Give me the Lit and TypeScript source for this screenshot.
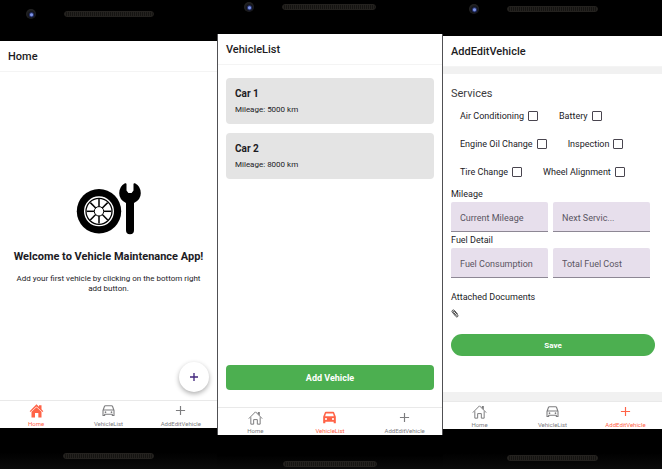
import { LitElement, html, css, svg } from "lit";
import { customElement, property } from "lit/decorators.js";

type Tab = "Home" | "VehicleList" | "AddEditVehicle";

const houseOutline = svg`
  <path d="M1.300 10 9 2.200 16.700 10M3.400 9.200V17H6.800V11.500H11.200V17H14.600V9.200"
    fill="none" stroke="currentColor" stroke-width="1.200" stroke-linejoin="round" stroke-linecap="round"/>
  <path d="M11.800 4.600V2.400H14.200V7.200Z" fill="currentColor"/>`;

const houseFilled = svg`
  <path d="M0.800 9.800 9 1.600 12 4.500V2.600H15V7.400L17.200 9.800 16.200 10.900 9 4.200 1.800 10.900Z" fill="currentColor"/>
  <path d="M3 10.600 9 5 15 10.600V17.400H11.200V12H7.200V17.400H3Z" fill="currentColor"/>`;

const carOutline = svg`
  <path d="M2.400 9 4.100 4.200Q4.400 3.300 5.300 3.300H12.700Q13.600 3.300 13.900 4.200L15.600 9V15H13.600V13.400H4.400V15H2.400ZM3 8.400H15"
    fill="none" stroke="currentColor" stroke-width="1.300" stroke-linejoin="round"/>
  <circle cx="5.400" cy="11" r="1" fill="currentColor"/>
  <circle cx="12.600" cy="11" r="1" fill="currentColor"/>`;

const carFilled = svg`
  <path fill-rule="evenodd" fill="currentColor"
    d="M3.400 2.900Q3.700 2.100 4.600 2.100H13.400Q14.300 2.100 14.600 2.900L16.600 8.200V15.800H14V14H4V15.800H1.400V8.200ZM3.800 7.400H14.200L13.200 4.300H4.800ZM4.800 9.500A1.300 1.300 0 1 0 4.800 12.100 1.300 1.300 0 1 0 4.800 9.500ZM13.200 9.500A1.300 1.300 0 1 0 13.200 12.100 1.300 1.300 0 1 0 13.200 9.500Z"/>`;

const plus = svg`
  <path d="M9 3.500V14.500M3.500 9H14.500" fill="none" stroke="currentColor" stroke-width="1.400"/>`;

@customElement("tab-bar")
class TabBar extends LitElement {
  @property() active: Tab = "Home";

  static styles = css`
    nav {
      display: grid;
      grid-template-columns: repeat(3, 1fr);
      border-top: 1px solid #e9e9e9;
      background: #fff;
    }
    a {
      display: flex;
      flex-direction: column;
      align-items: center;
      gap: 2px;
      padding-top: 2px;
      color: #7d7d7f;
      font: 6px/8px Roboto, sans-serif;
      text-decoration: none;
    }
    a.active {
      color: #ff6347;
    }
    svg {
      width: 15px;
      height: 15px;
    }
  `;

  private icon(tab: Tab) {
    if (tab === "Home") return this.active === tab ? houseFilled : houseOutline;
    if (tab === "VehicleList") return this.active === tab ? carFilled : carOutline;
    return plus;
  }

  render() {
    const tabs: Tab[] = ["Home", "VehicleList", "AddEditVehicle"];
    return html`<nav>
      ${tabs.map(
        (tab) => html`<a href="#${tab}" class=${tab === this.active ? "active" : ""}>
          <svg viewBox="0 0 18 18" aria-hidden="true">${this.icon(tab)}</svg>${tab}
        </a>`
      )}
    </nav>`;
  }
}

@customElement("phone-frame")
class PhoneFrame extends LitElement {
  @property() heading: Tab = "Home";

  static styles = css`
    :host {
      display: flex;
      flex-direction: column;
      background: #000;
    }
    .top,
    .bottom {
      box-sizing: border-box;
      display: flex;
      flex: none;
      align-items: flex-start;
    }
    .top {
      height: var(--top, 36px);
      padding: var(--camera-y, 4px) 0 0 12%;
      gap: 28px;
    }
    .bottom {
      height: var(--bottom, 40px);
      justify-content: center;
      padding-top: var(--grill-y, 26px);
      background: linear-gradient(#000 60%, #0b0b0b);
    }
    .camera {
      width: 10px;
      height: 10px;
      border-radius: 50%;
      background: radial-gradient(circle at 55% 58%, #7f95e8 0 1px, #27336e 2px, #14151c 3px, #222 5px);
    }
    .grill {
      box-sizing: border-box;
      width: 42%;
      height: 6px;
      border: 1px solid #24221f;
      border-radius: 3px;
      background: repeating-linear-gradient(90deg, #24221f 0 1px, #151412 1px 2px);
    }
    .top .grill {
      width: 47%;
      margin-top: 2px;
    }
    .screen {
      flex: 1;
      display: flex;
      flex-direction: column;
      background: #fff;
      border: 0 solid #505053;
      border-width: var(--edges, 0);
    }
    h1 {
      margin: 0;
      padding: 1px 8px 0;
      font: 500 11px/29px Roboto, sans-serif;
      color: #1c1c1e;
      border-bottom: 1px solid #f4f4f4;
    }
    .body {
      flex: 1;
      display: flex;
      flex-direction: column;
    }
  `;

  render() {
    return html`
      <div class="top"><span class="camera"></span><span class="grill"></span></div>
      <div class="screen">
        <h1>${this.heading}</h1>
        <div class="body"><slot></slot></div>
        <tab-bar .active=${this.heading}></tab-bar>
      </div>
      <div class="bottom"><span class="grill"></span></div>
    `;
  }
}

@customElement("app-root")
class AppRoot extends LitElement {
  static styles = css`
    :host {
      display: grid;
      grid-template-columns: 217fr 226fr 219fr;
      min-height: 100vh;
      background: #000;
      font-family: Roboto, sans-serif;
      color: #1c1b1f;
    }
    .home {
      --top: 41px;
      --camera-y: 9px;
      --bottom: 41px;
      --grill-y: 25px;
    }
    .list {
      --top: 34px;
      --camera-y: 2px;
      --bottom: 34px;
      --grill-y: 26px;
      --edges: 0 1px;
    }
    .edit {
      --top: 36px;
      --camera-y: 4px;
      --bottom: 40px;
      --grill-y: 26px;
    }
    h2,
    h3,
    p {
      margin: 0;
    }
    button {
      border: 0;
      padding: 0;
      font-family: inherit;
      cursor: pointer;
    }

    .welcome {
      position: relative;
      flex: 1;
      display: flex;
      flex-direction: column;
      align-items: center;
      justify-content: center;
      padding: 4px 8px 0;
      text-align: center;
    }
    .logo {
      width: 66px;
      height: 53px;
    }
    .welcome h2 {
      margin: 14px 0 9px;
      font-size: 11px;
      line-height: 16px;
      white-space: nowrap;
    }
    .welcome p {
      padding: 0 5px;
      font-size: 8px;
      line-height: 10px;
    }
    .fab {
      position: absolute;
      right: 8px;
      bottom: 8px;
      display: grid;
      place-items: center;
      width: 30px;
      height: 30px;
      border-radius: 50%;
      background: #fff;
      color: #43277e;
      box-shadow: 0 2px 5px rgb(0 0 0 / 32%);
    }
    .fab svg {
      width: 12px;
      height: 12px;
    }

    .vehicles {
      flex: 1;
      display: flex;
      flex-direction: column;
      gap: 9px;
      padding: 13px 8px 17px;
    }
    .card {
      padding: 8px 9px;
      border-radius: 4px;
      background: #e4e4e4;
    }
    .card h2 {
      font-size: 10px;
      line-height: 16px;
    }
    .card p {
      padding-top: 2px;
      font-size: 8px;
      line-height: 12px;
    }
    .primary {
      background: #4caf50;
      color: #fff;
      font-weight: 700;
    }
    .add {
      height: 25px;
      margin-top: auto;
      border-radius: 4px;
      font-size: 9px;
    }

    .form {
      flex: 1;
      display: flex;
      flex-direction: column;
      padding: 12px 7px 0 8px;
      border: 0 solid #f1f1f1;
      border-width: 7px 0 9px;
    }
    .form h2 {
      font-size: 11px;
      font-weight: 400;
      line-height: 16px;
      color: #3c3b40;
    }
    .services {
      display: flex;
      flex-direction: column;
      padding-left: 9px;
    }
    .row {
      display: flex;
      align-items: center;
      gap: 21px;
      height: 28px;
    }
    .row label {
      display: flex;
      align-items: center;
      gap: 4px;
      font-size: 9px;
      line-height: 12px;
      white-space: nowrap;
    }
    .row input {
      appearance: none;
      box-sizing: border-box;
      width: 10px;
      height: 10px;
      margin: 0;
      border: 1px solid #49454f;
      border-radius: 1px;
    }
    .row input:checked {
      background: #49454f;
    }
    .form h3 {
      font-size: 9px;
      font-weight: 400;
      line-height: 16px;
    }
    .fields {
      display: grid;
      grid-template-columns: 1fr 1fr;
      gap: 5px;
      padding-right: 5px;
    }
    .fields input {
      box-sizing: border-box;
      width: 100%;
      min-width: 0;
      height: 30px;
      padding: 2px 9px 0;
      border: 0;
      border-bottom: 1px solid #8d8794;
      border-radius: 2px 2px 0 0;
      background: #e7dfec;
      font: 9px Roboto, sans-serif;
      color: #49454f;
    }
    .fields input::placeholder {
      color: #5a5562;
      opacity: 1;
    }
    .documents {
      display: flex;
      flex-direction: column;
      align-items: flex-start;
      gap: 4px;
      padding: 11px 0 16px;
    }
    .attach {
      display: flex;
      background: none;
      color: #222;
    }
    .attach svg {
      width: 8px;
      height: 9px;
    }
    .save {
      height: 22px;
      border-radius: 11px;
      font-size: 8px;
    }
  `;

  private logo() {
    const spokes = [0, 45, 90, 135, 180, 225, 270, 315];
    return html`<svg class="logo" viewBox="0 0 66 53" aria-hidden="true">
      <circle cx="23" cy="29.300" r="22.200" />
      <circle cx="23" cy="29.300" r="15" fill="#fff" />
      <circle cx="23" cy="29.300" r="13" fill="none" stroke="#000" stroke-width="1.300" />
      ${spokes.map(
        (a) => svg`<path d="M23 17V25" stroke="#000" stroke-width="1.500" transform="rotate(${a} 23 29.300)"/>`
      )}
      <circle cx="23" cy="29.300" r="4.700" fill="#fff" stroke="#000" stroke-width="1" />
      <path
        d="M49 1.300Q50.300 0.800 50.500 2V8.500L52.400 11H55.600L57.500 8.500V2Q57.700 0.800 59 1.300Q64.800 4.500 64.800 11.200Q64.800 17.500 58 21V48.200A4 4 0 0 1 50 48.200V21Q43.200 17.500 43.200 11.200Q43.200 4.500 49 1.300Z"
      />
    </svg>`;
  }

  private check(label: string) {
    return html`<label>${label}<input type="checkbox" /></label>`;
  }

  private field(label: string, shown = label) {
    return html`<input type="text" aria-label=${label} placeholder=${shown} />`;
  }

  render() {
    const cars = [
      { name: "Car 1", mileage: 5000 },
      { name: "Car 2", mileage: 8000 },
    ];
    const services = [
      ["Air Conditioning", "Battery"],
      ["Engine Oil Change", "Inspection"],
      ["Tire Change", "Wheel Alignment"],
    ];
    return html`
      <phone-frame class="home" heading="Home">
        <section class="welcome">
          ${this.logo()}
          <h2>Welcome to Vehicle Maintenance App!</h2>
          <p>Add your first vehicle by clicking on the bottom right add button.</p>
          <button class="fab" aria-label="Add vehicle">
            <svg viewBox="0 0 18 18">
              <path d="M9 3V15M3 9H15" stroke="currentColor" stroke-width="2" />
            </svg>
          </button>
        </section>
      </phone-frame>

      <phone-frame class="list" heading="VehicleList">
        <section class="vehicles">
          ${cars.map(
            (car) => html`<article class="card">
              <h2>${car.name}</h2>
              <p>Mileage: ${car.mileage} km</p>
            </article>`
          )}
          <button class="primary add">Add Vehicle</button>
        </section>
      </phone-frame>

      <phone-frame class="edit" heading="AddEditVehicle">
        <form class="form">
          <h2>Services</h2>
          <div class="services">
            ${services.map((row) => html`<div class="row">${row.map((s) => this.check(s))}</div>`)}
          </div>
          <h3>Mileage</h3>
          <div class="fields">
            ${this.field("Current Mileage")} ${this.field("Next Service", "Next Servic...")}
          </div>
          <h3>Fuel Detail</h3>
          <div class="fields">${this.field("Fuel Consumption")} ${this.field("Total Fuel Cost")}</div>
          <div class="documents">
            <h3>Attached Documents</h3>
            <button type="button" class="attach" aria-label="Attach a document">
              <svg viewBox="0 0 16 18">
                <path
                  d="M12.500 9.500 7 3Q5 1 3 2.600Q1 4.400 2.600 6.500L9.800 15Q11.500 16.800 13.200 15.400Q14.800 14 13.400 12.100L7.300 5Q6.200 4 5.200 4.900Q4.300 5.800 5.200 6.900L10.400 13"
                  fill="none" stroke="currentColor" stroke-width="1.600" stroke-linecap="round"
                />
              </svg>
            </button>
          </div>
          <button type="button" class="primary save">Save</button>
        </form>
      </phone-frame>
    `;
  }
}
